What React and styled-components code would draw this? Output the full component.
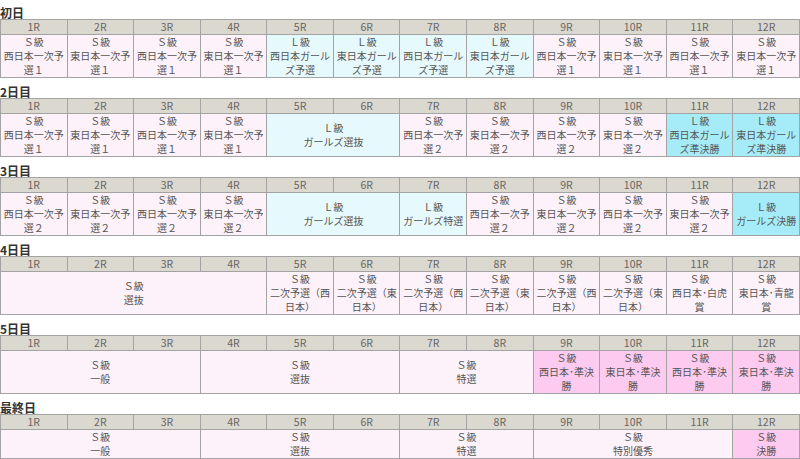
import React from "react";
import styled, { createGlobalStyle } from "styled-components";

const GlobalStyle = createGlobalStyle`
  body {
    margin: 0;
    background: #fff;
    font-family: "Noto Sans CJK JP", "Noto Sans", sans-serif;
  }
`;

// kind: s = S級, l = L級, sf = S級 決勝系, lf = L級 決勝系
const schedule = [
  {
    day: "初日",
    races: [
      { span: 1, kind: "s", lines: ["Ｓ級", "西日本一次予選１"] },
      { span: 1, kind: "s", lines: ["Ｓ級", "東日本一次予選１"] },
      { span: 1, kind: "s", lines: ["Ｓ級", "西日本一次予選１"] },
      { span: 1, kind: "s", lines: ["Ｓ級", "東日本一次予選１"] },
      { span: 1, kind: "l", lines: ["Ｌ級", "西日本ガールズ予選"] },
      { span: 1, kind: "l", lines: ["Ｌ級", "東日本ガールズ予選"] },
      { span: 1, kind: "l", lines: ["Ｌ級", "西日本ガールズ予選"] },
      { span: 1, kind: "l", lines: ["Ｌ級", "東日本ガールズ予選"] },
      { span: 1, kind: "s", lines: ["Ｓ級", "西日本一次予選１"] },
      { span: 1, kind: "s", lines: ["Ｓ級", "東日本一次予選１"] },
      { span: 1, kind: "s", lines: ["Ｓ級", "西日本一次予選１"] },
      { span: 1, kind: "s", lines: ["Ｓ級", "東日本一次予選１"] },
    ],
  },
  {
    day: "2日目",
    races: [
      { span: 1, kind: "s", lines: ["Ｓ級", "西日本一次予選１"] },
      { span: 1, kind: "s", lines: ["Ｓ級", "東日本一次予選１"] },
      { span: 1, kind: "s", lines: ["Ｓ級", "西日本一次予選１"] },
      { span: 1, kind: "s", lines: ["Ｓ級", "東日本一次予選１"] },
      { span: 2, kind: "l", lines: ["Ｌ級", "ガールズ選抜"] },
      { span: 1, kind: "s", lines: ["Ｓ級", "西日本一次予選２"] },
      { span: 1, kind: "s", lines: ["Ｓ級", "東日本一次予選２"] },
      { span: 1, kind: "s", lines: ["Ｓ級", "西日本一次予選２"] },
      { span: 1, kind: "s", lines: ["Ｓ級", "東日本一次予選２"] },
      { span: 1, kind: "lf", lines: ["Ｌ級", "西日本ガールズ準決勝"] },
      { span: 1, kind: "lf", lines: ["Ｌ級", "東日本ガールズ準決勝"] },
    ],
  },
  {
    day: "3日目",
    races: [
      { span: 1, kind: "s", lines: ["Ｓ級", "西日本一次予選２"] },
      { span: 1, kind: "s", lines: ["Ｓ級", "東日本一次予選２"] },
      { span: 1, kind: "s", lines: ["Ｓ級", "西日本一次予選２"] },
      { span: 1, kind: "s", lines: ["Ｓ級", "東日本一次予選２"] },
      { span: 2, kind: "l", lines: ["Ｌ級", "ガールズ選抜"] },
      { span: 1, kind: "l", lines: ["Ｌ級", "ガールズ特選"] },
      { span: 1, kind: "s", lines: ["Ｓ級", "西日本一次予選２"] },
      { span: 1, kind: "s", lines: ["Ｓ級", "東日本一次予選２"] },
      { span: 1, kind: "s", lines: ["Ｓ級", "西日本一次予選２"] },
      { span: 1, kind: "s", lines: ["Ｓ級", "東日本一次予選２"] },
      { span: 1, kind: "lf", lines: ["Ｌ級", "ガールズ決勝"] },
    ],
  },
  {
    day: "4日目",
    races: [
      { span: 4, kind: "s", lines: ["Ｓ級", "選抜"] },
      { span: 1, kind: "s", lines: ["Ｓ級", "二次予選（西日本）"] },
      { span: 1, kind: "s", lines: ["Ｓ級", "二次予選（東日本）"] },
      { span: 1, kind: "s", lines: ["Ｓ級", "二次予選（西日本）"] },
      { span: 1, kind: "s", lines: ["Ｓ級", "二次予選（東日本）"] },
      { span: 1, kind: "s", lines: ["Ｓ級", "二次予選（西日本）"] },
      { span: 1, kind: "s", lines: ["Ｓ級", "二次予選（東日本）"] },
      { span: 1, kind: "s", lines: ["Ｓ級", "西日本･白虎賞"] },
      { span: 1, kind: "s", lines: ["Ｓ級", "東日本･青龍賞"] },
    ],
  },
  {
    day: "5日目",
    races: [
      { span: 3, kind: "s", lines: ["Ｓ級", "一般"] },
      { span: 3, kind: "s", lines: ["Ｓ級", "選抜"] },
      { span: 2, kind: "s", lines: ["Ｓ級", "特選"] },
      { span: 1, kind: "sf", lines: ["Ｓ級", "西日本･準決勝"] },
      { span: 1, kind: "sf", lines: ["Ｓ級", "東日本･準決勝"] },
      { span: 1, kind: "sf", lines: ["Ｓ級", "西日本･準決勝"] },
      { span: 1, kind: "sf", lines: ["Ｓ級", "東日本･準決勝"] },
    ],
  },
  {
    day: "最終日",
    races: [
      { span: 3, kind: "s", lines: ["Ｓ級", "一般"] },
      { span: 3, kind: "s", lines: ["Ｓ級", "選抜"] },
      { span: 2, kind: "s", lines: ["Ｓ級", "特選"] },
      { span: 3, kind: "s", lines: ["Ｓ級", "特別優秀"] },
      { span: 1, kind: "sf", lines: ["Ｓ級", "決勝"] },
    ],
  },
];

const fills = {
  s: "#fdf2fa",
  l: "#e6f9fc",
  sf: "#fdcbef",
  lf: "#a6ecf8",
};

const raceNumbers = Array.from({ length: 12 }, (_, i) => `${i + 1}R`);

const App = () => {
  return (
    <>
      <GlobalStyle />
      <Wrapper>
        {schedule.map((d) => (
          <Day key={d.day}>
            <DayTitle>{d.day}</DayTitle>
            <Table>
              <colgroup>
                {raceNumbers.map((r) => (
                  <col key={r} />
                ))}
              </colgroup>
              <thead>
                <tr>
                  {raceNumbers.map((r) => (
                    <HeadCell key={r}>{r}</HeadCell>
                  ))}
                </tr>
              </thead>
              <tbody>
                <tr>
                  {d.races.map((race, i) => (
                    <BodyCell key={i} colSpan={race.span} $kind={race.kind}>
                      {race.lines.map((l, j) => (
                        <Line key={j}>{l}</Line>
                      ))}
                    </BodyCell>
                  ))}
                </tr>
              </tbody>
            </Table>
          </Day>
        ))}
      </Wrapper>
    </>
  );
};

export default App;

/* -------------------- Styled Components -------------------- */
const Wrapper = styled.div`
  width: 800px;
  padding-top: 6px;
  display: flex;
  flex-direction: column;
  gap: 7px;
`;

const Day = styled.section`
  display: flex;
  flex-direction: column;
`;

const DayTitle = styled.h3`
  margin: 0;
  font-size: 12px;
  line-height: 13px;
  font-weight: bold;
  color: #333;
`;

const Table = styled.table`
  width: 800px;
  border-collapse: collapse;
  table-layout: fixed;
`;

const HeadCell = styled.th`
  background: #dbd8cf;
  border: 1px solid #a3a3a3;
  color: #666;
  font-size: 10.5px;
  font-weight: normal;
  line-height: 14px;
  padding: 0;
  text-align: center;
`;

const BodyCell = styled.td`
  background: ${(p) => fills[p.$kind]};
  border: 1px solid #a3a3a3;
  color: #555;
  font-size: 10px;
  line-height: 14px;
  padding: 0 2px;
  text-align: center;
  vertical-align: middle;
`;

const Line = styled.div`
  word-break: break-all;
`;
